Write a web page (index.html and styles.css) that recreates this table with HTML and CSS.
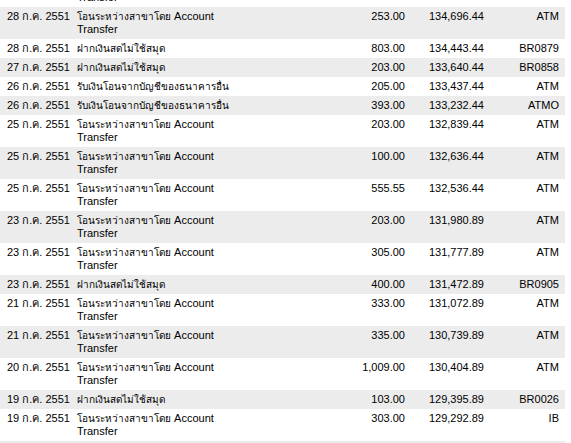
FILE: index.html
```html
<!DOCTYPE html>
<html lang="th">
<head>
<meta charset="utf-8">
<title>Statement</title>
<link rel="stylesheet" href="styles.css">
</head>
<body>
<div class="list">
  <div class="row two"><div class="date">29 ก.ค. 2551</div><div class="desc"><span class="th">โอนระหว่างสาขาโดย</span> Account<br>Transfer</div><div class="amt">250.00</div><div class="bal">134,949.44</div><div class="ref">ATM</div></div>
  <div class="row two alt"><div class="date">28 ก.ค. 2551</div><div class="desc"><span class="th">โอนระหว่างสาขาโดย</span> Account<br>Transfer</div><div class="amt">253.00</div><div class="bal">134,696.44</div><div class="ref">ATM</div></div>
  <div class="row"><div class="date">28 ก.ค. 2551</div><div class="desc"><span class="th">ฝากเงินสดไม่ใช้สมุด</span></div><div class="amt">803.00</div><div class="bal">134,443.44</div><div class="ref">BR0879</div></div>
  <div class="row alt"><div class="date">27 ก.ค. 2551</div><div class="desc"><span class="th">ฝากเงินสดไม่ใช้สมุด</span></div><div class="amt">203.00</div><div class="bal">133,640.44</div><div class="ref">BR0858</div></div>
  <div class="row"><div class="date">26 ก.ค. 2551</div><div class="desc"><span class="th">รับเงินโอนจากบัญชีของธนาคารอื่น</span></div><div class="amt">205.00</div><div class="bal">133,437.44</div><div class="ref">ATM</div></div>
  <div class="row alt"><div class="date">26 ก.ค. 2551</div><div class="desc"><span class="th">รับเงินโอนจากบัญชีของธนาคารอื่น</span></div><div class="amt">393.00</div><div class="bal">133,232.44</div><div class="ref">ATMO</div></div>
  <div class="row two"><div class="date">25 ก.ค. 2551</div><div class="desc"><span class="th">โอนระหว่างสาขาโดย</span> Account<br>Transfer</div><div class="amt">203.00</div><div class="bal">132,839.44</div><div class="ref">ATM</div></div>
  <div class="row two alt"><div class="date">25 ก.ค. 2551</div><div class="desc"><span class="th">โอนระหว่างสาขาโดย</span> Account<br>Transfer</div><div class="amt">100.00</div><div class="bal">132,636.44</div><div class="ref">ATM</div></div>
  <div class="row two"><div class="date">25 ก.ค. 2551</div><div class="desc"><span class="th">โอนระหว่างสาขาโดย</span> Account<br>Transfer</div><div class="amt">555.55</div><div class="bal">132,536.44</div><div class="ref">ATM</div></div>
  <div class="row two alt"><div class="date">23 ก.ค. 2551</div><div class="desc"><span class="th">โอนระหว่างสาขาโดย</span> Account<br>Transfer</div><div class="amt">203.00</div><div class="bal">131,980.89</div><div class="ref">ATM</div></div>
  <div class="row two"><div class="date">23 ก.ค. 2551</div><div class="desc"><span class="th">โอนระหว่างสาขาโดย</span> Account<br>Transfer</div><div class="amt">305.00</div><div class="bal">131,777.89</div><div class="ref">ATM</div></div>
  <div class="row alt"><div class="date">23 ก.ค. 2551</div><div class="desc"><span class="th">ฝากเงินสดไม่ใช้สมุด</span></div><div class="amt">400.00</div><div class="bal">131,472.89</div><div class="ref">BR0905</div></div>
  <div class="row two"><div class="date">21 ก.ค. 2551</div><div class="desc"><span class="th">โอนระหว่างสาขาโดย</span> Account<br>Transfer</div><div class="amt">333.00</div><div class="bal">131,072.89</div><div class="ref">ATM</div></div>
  <div class="row two alt"><div class="date">21 ก.ค. 2551</div><div class="desc"><span class="th">โอนระหว่างสาขาโดย</span> Account<br>Transfer</div><div class="amt">335.00</div><div class="bal">130,739.89</div><div class="ref">ATM</div></div>
  <div class="row two"><div class="date">20 ก.ค. 2551</div><div class="desc"><span class="th">โอนระหว่างสาขาโดย</span> Account<br>Transfer</div><div class="amt">1,009.00</div><div class="bal">130,404.89</div><div class="ref">ATM</div></div>
  <div class="row alt"><div class="date">19 ก.ค. 2551</div><div class="desc"><span class="th">ฝากเงินสดไม่ใช้สมุด</span></div><div class="amt">103.00</div><div class="bal">129,395.89</div><div class="ref">BR0026</div></div>
  <div class="row two"><div class="date">19 ก.ค. 2551</div><div class="desc"><span class="th">โอนระหว่างสาขาโดย</span> Account<br>Transfer</div><div class="amt">303.00</div><div class="bal">129,292.89</div><div class="ref">IB</div></div>
  <div class="row alt"><div class="date">18 ก.ค. 2551</div><div class="desc"><span class="th">ฝากเงินสดไม่ใช้สมุด</span></div><div class="amt">100.00</div><div class="bal">128,989.89</div><div class="ref">BR0001</div></div>
</div>
</body>
</html>
```
FILE: styles.css
```css
html, body {
  margin: 0;
  padding: 0;
  background: #ffffff;
  overflow: hidden;
}
body {
  font-family: "Liberation Sans", Arial, sans-serif;
  font-size: 11px;
  color: #000000;
}
.list {
  width: 565px;
  margin-top: -25px;
}
.row {
  display: grid;
  grid-template-columns: 74px 226px 105px 79px 75px;
  height: 19px;
  box-sizing: border-box;
  padding: 3px 0;
  line-height: 13px;
  white-space: nowrap;
}
.row.two {
  height: 32px;
}
.row.alt {
  background: #ececec;
}
.date {
  padding-left: 7px;
}
.desc {
  padding-left: 3px;
  overflow: hidden;
}
.th {
  font-size: 10px;
}
.amt, .bal, .ref {
  text-align: right;
}
```
